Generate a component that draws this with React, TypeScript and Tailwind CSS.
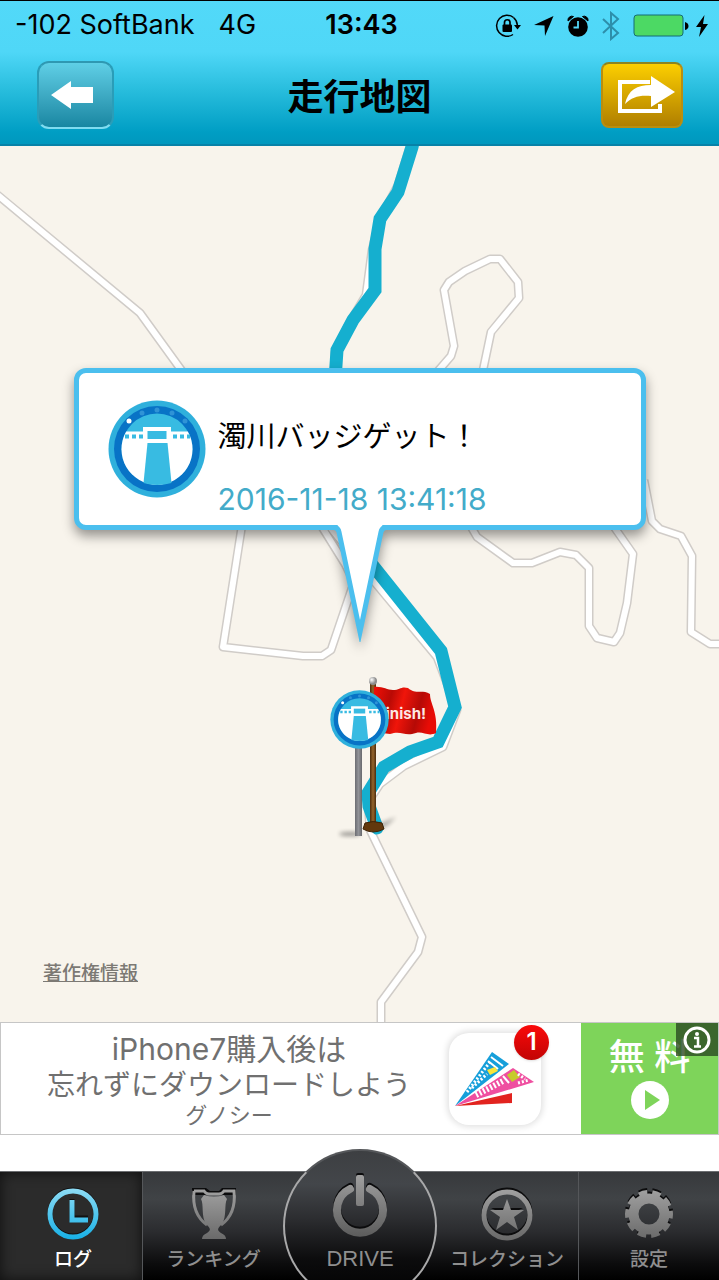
import React from "react";

interface TabProps {
  label: string;
  active?: boolean;
  divider?: boolean;
  children: React.ReactNode;
}

const roads = [
  "M-6 192 L140 313 L182 371",
  "M412 140 L398 185 L380 219 L372 250 L366 295 L350 322 L335 352 L335 380",
  "M438 371 L451 356 L454 346 L444 290 L449 282 L465 271 L490 259 L500 259 L518 282 L519 298 L491 332 L482 375",
  "M242 525 L223 647 L303 656 L322 656 L331 650 L352 588",
  "M322 527 L345 564 L358 590",
  "M470 525 L477 537 L513 563 L532 563 L560 552 L576 555 L589 568 L589 626 L597 638 L614 642 L620 633 L627 603 L633 554 L612 524",
  "M644 480 L652 521 L660 529 L681 536 L692 556 L691 632 L710 644 L726 644",
  "M330 527 L372 579 L437 657 L457 710 L443 747 L404 766 L380 784 L368 802 L370 830 L422 937 L418 952 L381 1002 L381 1030",
];

const routes = [
  "M414 138 L412 147 L398 192 L380 219 L375 249 L375 290 L353 320 L337 350 L335 380",
  "M366 557 L441 651 L455 707 L438 742 L410 752 L384 767 L368 793 L369 806 L377 828",
];

const BadgeArt = () => (
  <>
    <circle cx="49" cy="49" r="48.5" fill="#2fb0dc" />
    <circle cx="49" cy="49" r="43" fill="#0873c6" />
    <circle cx="49" cy="49" r="35.5" fill="#38bbe2" />
    <path d="M18.2 31.5 H79.8 A35.5 35.5 0 1 1 18.2 31.5Z" fill="#fff" />
    <path d="M17 36.5 H35 M65 36.5 H82" stroke="#38bbe2" strokeWidth="4" strokeDasharray="4 3" />
    <rect x="35" y="27" width="28" height="16" fill="#fff" />
    <rect x="39.5" y="31" width="19" height="8" fill="#38bbe2" />
    <path d="M39.5 43 H59.5 L63.5 83 C54 85.5 44 85.5 35.5 83Z" fill="#38bbe2" />
    <circle cx="21" cy="21" r="2.5" fill="#fff" />
    <g fill="#2f93d6">
      <circle cx="34" cy="13" r="2.5" />
      <circle cx="49" cy="10" r="2.5" />
      <circle cx="64" cy="13" r="2.5" />
      <circle cx="77" cy="21" r="2.5" />
    </g>
  </>
);

const RouteMap = () => (
  <svg
    className="absolute inset-0 h-full w-full"
    viewBox="0 146 719 876"
    preserveAspectRatio="xMidYMid slice"
    aria-hidden="true"
  >
    <defs>
      <linearGradient id="flag" x1="0" y1="0" x2="1" y2="0.2">
        <stop offset="0" stopColor="#f30f06" />
        <stop offset="0.3" stopColor="#b90a05" />
        <stop offset="0.5" stopColor="#f0150a" />
        <stop offset="0.78" stopColor="#b50a06" />
        <stop offset="1" stopColor="#e80c06" />
      </linearGradient>
      <linearGradient id="wood" x1="0" y1="0" x2="1" y2="0">
        <stop offset="0" stopColor="#4c2c0c" />
        <stop offset="0.5" stopColor="#96652c" />
        <stop offset="1" stopColor="#4c2c0c" />
      </linearGradient>
      <linearGradient id="steel" x1="0" y1="0" x2="1" y2="0">
        <stop offset="0" stopColor="#6c6d72" />
        <stop offset="0.5" stopColor="#929398" />
        <stop offset="1" stopColor="#67686c" />
      </linearGradient>
      <radialGradient id="ball" cx="0.35" cy="0.35">
        <stop offset="0" stopColor="#fff" />
        <stop offset="1" stopColor="#8c8c8c" />
      </radialGradient>
      <filter id="soft" x="-50%" y="-100%" width="200%" height="300%">
        <feGaussianBlur stdDeviation="2" />
      </filter>
    </defs>

    {/* Roads */}
    <g fill="none" strokeLinejoin="round">
      {roads.map((d) => (
        <path key={d} d={d} stroke="#d0ccc8" strokeWidth="9" />
      ))}
      {roads.map((d) => (
        <path key={d} d={d} stroke="#fff" strokeWidth="6" />
      ))}
    </g>

    {/* Driven route */}
    <g fill="none" stroke="#15afcf" strokeWidth="13" strokeLinecap="round">
      {routes.map((d) => (
        <path key={d} d={d} />
      ))}
    </g>

    {/* Finish flag */}
    <path d="M374 826 L396 817 L388 825 L378 831Z" fill="#000" opacity="0.3" filter="url(#soft)" />
    <rect x="370" y="683" width="6" height="142" fill="url(#wood)" />
    <path d="M365 823 Q373 820 382 823 L384 829 Q373 835 363 829Z" fill="#62380d" stroke="#3f2407" />
    <circle cx="373" cy="681" r="4" fill="url(#ball)" />
    <path
      d="M374 687 C382 686 387 690 393 690 C400 690 401 686 408 688 C416 695 422 689 430 694 C430 704 438 711 436 733 C428 737 423 731 416 733 C404 737 402 730 390 734 L374 732Z"
      fill="url(#flag)"
    />
    <text x="377" y="719" fill="#fde8e4" fontSize="15" fontWeight="700" fontFamily="Inter, sans-serif">
      Finish!
    </text>

    {/* Badge pin */}
    <ellipse cx="350" cy="834" rx="11" ry="2" fill="#000" opacity="0.4" filter="url(#soft)" />
    <rect x="355" y="745" width="7" height="91" fill="url(#steel)" />
    <svg x="330" y="690" width="59" height="59" viewBox="0 0 98 98">
      <BadgeArt />
    </svg>
  </svg>
);

const StatusBar = () => (
  <div className="grid h-[50px] grid-cols-[1fr_auto_1fr] items-center border-t border-black pl-[15px] pr-[11px] text-[27px] text-black">
    <div className="flex gap-6 whitespace-nowrap">
      <span>-102 SoftBank</span>
      <span>4G</span>
    </div>
    <span className="font-semibold">13:43</span>
    <div className="flex items-center justify-end gap-[13px]">
      <svg className="h-6 w-[26px]" viewBox="0 0 26 24" fill="none" stroke="#000">
        <path d="M18.5 3.5 A10.5 10.5 0 1 0 18 20.5" strokeWidth="1.5" />
        <path d="M18.5 3.5 Q22 6.5 22.3 11" strokeWidth="1.5" />
        <path d="M19 11 H26 L22.5 15.5Z" fill="#000" stroke="none" />
        <rect x="7.5" y="10.5" width="9.5" height="7.5" rx="1" fill="#000" stroke="none" />
        <path d="M9.5 11 V8.5 A2.7 2.7 0 0 1 15 8.5 V11" strokeWidth="1.7" />
      </svg>
      <svg className="h-5 w-5" viewBox="0 0 20 20">
        <path d="M19.5 0 L11 20 L10.5 9.5 L0 9Z" />
      </svg>
      <svg className="h-[22px] w-[22px]" viewBox="0 0 22 22">
        <circle cx="11" cy="12" r="9.8" />
        <path d="M1 6 A4 4 0 0 1 6.5 1.5Z M21 6 A4 4 0 0 0 15.5 1.5Z" stroke="#000" />
        <path d="M11 6 V12.5 H6.5" fill="none" stroke="#52d8f8" strokeWidth="1.8" />
      </svg>
      <svg className="h-[30px] w-[18px]" viewBox="0 0 18 30" fill="none" stroke="#2d8eaa" strokeWidth="2">
        <path d="M1 8 L16 22 L9 28 V2 L16 8 L1 22" />
      </svg>
      <div className="flex items-center gap-[7px]">
        <svg className="h-6 w-14" viewBox="0 0 56 24">
          <rect x="1" y="1" width="49" height="21" rx="3" fill="#4cd964" stroke="#156c74" />
          <path d="M52 8 Q55.5 9 55.5 12 Q55.5 15 52 16Z" />
        </svg>
        <svg className="h-[22px] w-3" viewBox="0 0 12 22">
          <path d="M8.5 0 L0 12 H5 L3 22 L12 9 H7Z" />
        </svg>
      </div>
    </div>
  </div>
);

const Header = () => (
  <header className="border-b-2 border-[#0782a8] bg-[linear-gradient(#52d9f9_0px,#4fd7f7_52px,#28bddd_90px,#009ec4_132px,#0098be_100%)]">
    <StatusBar />
    <div className="flex h-[94px] items-center justify-between pb-1 pl-[37px] pr-9">
      <button
        aria-label="戻る"
        className="flex h-[68px] w-[77px] items-center justify-center rounded-xl border-2 border-x-[#2a9db8] border-t-[#2f98b2] border-b-[#7fdcf0] bg-linear-to-b from-[#5fcfe6] to-[#1787a2] pr-2"
      >
        <svg className="h-7 w-[42px]" viewBox="0 0 42 28" fill="#fff">
          <path d="M0 14 L20 0 V6 H42 V22 H20 V28Z" />
        </svg>
      </button>
      <h1 className="pl-1 pt-1 text-[36px] font-bold leading-none text-black">走行地図</h1>
      <button
        aria-label="共有"
        className="flex h-[66px] w-[82px] items-center justify-center rounded-lg border-2 border-[#b98e10] border-t-[#8b8422] bg-linear-to-b from-[#fccf00] to-[#b07f00] pl-2"
      >
        <svg className="h-[38px] w-[58px]" viewBox="0 0 58 38">
          <path d="M33 6 H3 V35 H43 V28" fill="none" stroke="#fff" strokeWidth="4" />
          <path d="M8 28 C11 14 20 9 34 9 V0 L58 16 L34 31 V20 C22 19 15 21 8 28Z" fill="#fff" />
        </svg>
      </button>
    </div>
  </header>
);

const Callout = () => (
  <div className="absolute left-1/2 top-[222px] w-[572px] -translate-x-1/2 drop-shadow-[0_6px_6px_rgba(0,0,0,0.4)]">
    <div className="flex h-[162px] items-center gap-3 rounded-xl border-[5px] border-[#4bbfee] bg-white pl-[29px]">
      <svg className="h-[98px] w-[98px] shrink-0" viewBox="0 0 98 98" aria-hidden="true">
        <BadgeArt />
      </svg>
      <div className="flex flex-col gap-[22px] pt-[38px] leading-10 whitespace-nowrap">
        <p className="text-[29px] text-black">濁川バッジゲット！</p>
        <p className="text-[30px] text-[#43abc9]">2016-11-18 13:41:18</p>
      </div>
    </div>
    <svg className="absolute left-[260px] top-[154px] h-[120px] w-[52px]" viewBox="0 0 52 120" aria-hidden="true">
      <path d="M3 0 H49 L26 110Z" fill="#fff" />
      <path
        d="M0 5.5 Q4 5.5 5 10 L26 110 L47 10 Q48 5.5 52 5.5"
        fill="none"
        stroke="#4bbfee"
        strokeWidth="5"
        strokeMiterlimit="10"
      />
    </svg>
  </div>
);

const AdBanner = () => (
  <aside className="flex h-[113px] border border-[#c6c6c6] bg-white">
    <div className="flex flex-1 items-center justify-between pl-[46px] pr-10">
      <div className="text-center text-[28px] leading-9 whitespace-nowrap text-[#707070]">
        <p className="text-[30px]">iPhone7購入後は</p>
        <p>忘れずにダウンロードしよう</p>
        <p className="text-[22px] leading-6">グノシー</p>
      </div>
      <div className="relative flex h-[92px] w-[92px] items-center justify-center rounded-[20px] bg-white shadow-[0_0_6px_2px_rgba(0,0,0,0.12)]">
        <svg className="h-14 w-20" viewBox="0 0 80 56" aria-hidden="true">
          <path d="M0 55 L37 1 L54 13Z" fill="#169fda" />
          <path d="M0 55 L58 17 L79 31Z" fill="#ef4fa0" />
          <path d="M0 55 L57 42 V52Z" fill="#e2231f" />
          <path d="M12 41 L35 11 M17 37 L32 23" stroke="#fff" strokeWidth="3" strokeDasharray="2 2" />
          <path d="M36 6 L48 15 M33 10 L43 18" stroke="#fff" strokeWidth="2" />
          <path d="M32 19 L40 16 L43 20 L35 24Z" fill="#f8e53b" />
          <path d="M21 44 L48 30" stroke="#fff" strokeWidth="6" strokeDasharray="2 2" />
          <path d="M48 25 L54 32" stroke="#fff" strokeWidth="2" />
          <path d="M52 24 L59 19 L65 26 L57 31Z" fill="#c6cb2c" />
          <path d="M63 32 L74 29 M63 23 L70 28" stroke="#fff" strokeWidth="3" strokeDasharray="2 2" />
        </svg>
        <span className="absolute -right-2 -top-2 flex h-[35px] w-[35px] items-center justify-center rounded-full bg-linear-to-b from-[#fa0a0a] to-[#c20404] text-[24px] font-semibold leading-none text-white shadow">
          1
        </span>
      </div>
    </div>
    <a href="#install" className="relative flex w-[137px] flex-col items-center bg-[#7ed45a] pt-[10px] text-white">
      <span className="text-[36px] leading-[48px] font-medium">無 料</span>
      <svg className="h-[38px] w-[38px]" viewBox="0 0 38 38" aria-hidden="true">
        <circle cx="19" cy="19" r="19" fill="#fff" />
        <path d="M14 9 L29 19 L14 29Z" fill="#7ed45a" />
      </svg>
      <span className="absolute right-0 top-0 flex h-[33px] w-[42px] items-center justify-center bg-[#2a4a22]/80">
        <svg className="h-7 w-7" viewBox="0 0 28 28" aria-hidden="true">
          <circle cx="14" cy="14" r="12" fill="none" stroke="#fff" strokeWidth="3" />
          <circle cx="14" cy="8" r="2" fill="#fff" />
          <path d="M11 12 H15 V20 M11 20.5 H18" fill="none" stroke="#fff" strokeWidth="2.5" />
        </svg>
      </span>
    </a>
  </aside>
);

const Tab: React.FC<TabProps> = ({ label, active, divider, children }) => (
  <button
    className={`flex flex-col items-center gap-1.5 pt-[14px] text-[19px] leading-6 font-medium whitespace-nowrap ${
      active ? "bg-[#2b2b2b] pl-1 text-white shadow-[inset_0_0_14px_#000000aa]" : "text-[#8f8f8f]"
    } ${divider ? "border-l border-[#55575a]" : ""}`}
  >
    <svg className="h-14 w-14" viewBox="0 0 56 56" aria-hidden="true">
      {children}
    </svg>
    {label}
  </button>
);

const TabBar = () => (
  <nav className="relative grid h-[109px] grid-cols-[142fr_142fr_152fr_142fr_141fr] border-t border-[#6c6e71] bg-[linear-gradient(#37393c,#404346_25%,#2b2c2f_55%,#0c0c0d_85%,#000)]">
    <svg className="absolute h-0 w-0" aria-hidden="true">
      <defs>
        <linearGradient id="blue" gradientUnits="userSpaceOnUse" x1="0" y1="2" x2="0" y2="54">
          <stop offset="0" stopColor="#8fdcf5" />
          <stop offset="1" stopColor="#16b0e6" />
        </linearGradient>
        <linearGradient id="grey" gradientUnits="userSpaceOnUse" x1="0" y1="2" x2="0" y2="64">
          <stop offset="0" stopColor="#a2a2a2" />
          <stop offset="1" stopColor="#5e5e5e" />
        </linearGradient>
      </defs>
    </svg>
    <Tab label="ログ" active>
      <g fill="none">
        <circle cx="28" cy="27" r="23" stroke="#111" strokeWidth="5" />
        <path d="M27 13 V32 H43" stroke="#111" strokeWidth="5" />
        <circle cx="28" cy="28" r="23" stroke="url(#blue)" strokeWidth="5" />
        <path d="M27 14 V34 H43" stroke="url(#blue)" strokeWidth="5" />
      </g>
    </Tab>
    <Tab label="ランキング" divider>
      <path d="M6 2 H20 L24 5 H33 L36 2 H50 V9 H6Z" fill="#0c0c0d" />
      <path
        d="M8 5 H18 Q20 8 23 8 H33 Q36 8 38 5 H48 C50 24 42 34 35 39 M8 5 C6 24 14 34 21 39"
        fill="none"
        stroke="url(#grey)"
        strokeWidth="3"
      />
      <path
        d="M18 9 Q28 12 38 9 L41 13 C38 18 41 31 36 38 C31 43 31 44 35 47 Q40 49 40 53 H16 Q16 49 21 47 C25 44 25 43 20 38 C15 31 18 18 15 13Z"
        fill="url(#grey)"
      />
    </Tab>
    <button className="relative flex justify-center text-[22px] leading-6 text-[#8f8f8f] [font-family:'Liberation_Sans',sans-serif]">
      <span className="absolute -left-px bottom-0 flex h-[131px] w-[154px] flex-col items-center overflow-hidden">
        <span className="absolute left-0 top-0 h-[154px] w-[154px] rounded-full border-2 border-[#a9a9aa] border-t-[#55575a] bg-[linear-gradient(#3d3f42,#43464a_22%,#2b2c2f_46%,#0c0c0d_72%,#000)]" />
        <svg className="relative mt-[22px] h-[68px] w-16" viewBox="0 0 64 68" aria-hidden="true">
          <g fill="none" strokeLinecap="round">
            <path d="M22 16 A23 23 0 1 0 42 16" stroke="#0b0b0c" strokeWidth="8" />
            <path d="M22 18 A23 23 0 1 0 42 18" stroke="url(#grey)" strokeWidth="8" />
          </g>
          <rect x="28" y="2" width="8" height="30" rx="2" fill="#0b0b0c" />
          <rect x="28" y="4" width="8" height="31" rx="2" fill="url(#grey)" />
        </svg>
        <span className="relative mt-2">DRIVE</span>
      </span>
    </button>
    <Tab label="コレクション">
      <g fill="none">
        <circle cx="28" cy="27" r="23" stroke="#0c0c0d" strokeWidth="5" />
        <circle cx="28" cy="29" r="23" stroke="url(#grey)" strokeWidth="5" />
      </g>
      <path d="M12 22 H44 L28 30Z" fill="#0c0c0d" />
      <path d="M28 13 L32 24 H45 L35 31 L39 44 L28 36 L17 44 L21 31 L11 24 H24Z" fill="url(#grey)" />
    </Tab>
    <Tab label="設定" divider>
      <g fill="none">
        <circle cx="28" cy="26" r="17" stroke="#0c0c0d" strokeWidth="7" />
        <circle cx="28" cy="26" r="21" stroke="#0c0c0d" strokeWidth="6" strokeDasharray="8.2 5" strokeDashoffset="4" />
        <circle cx="28" cy="28" r="15.5" stroke="url(#grey)" strokeWidth="10" />
        <circle cx="28" cy="28" r="21" stroke="url(#grey)" strokeWidth="6" strokeDasharray="8.2 5" strokeDashoffset="4" />
      </g>
    </Tab>
  </nav>
);

export default function App() {
  return (
    <div className="flex min-h-screen flex-col bg-white [font-family:Inter,'Noto_Sans_CJK_JP',sans-serif]">
      <Header />
      <main className="relative flex-1 overflow-hidden bg-[#f8f4ec]">
        <RouteMap />
        <Callout />
        <a
          href="#copyright"
          className="absolute bottom-9 left-[43px] text-[19px] leading-6 font-medium text-[#7c7974] underline"
        >
          著作権情報
        </a>
      </main>
      <AdBanner />
      <div className="h-9" />
      <TabBar />
    </div>
  );
}
